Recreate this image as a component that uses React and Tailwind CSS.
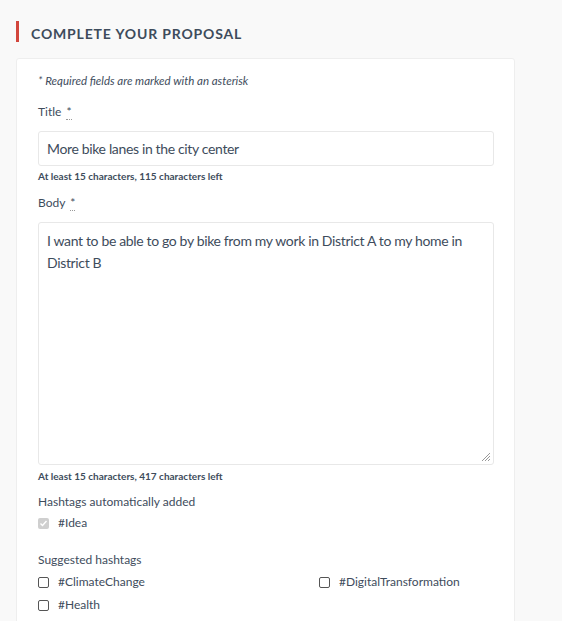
export default function App() {
  const font = { fontFamily: 'Lato, "Liberation Sans", sans-serif' };
  return (
    <div className="min-h-[621px] w-[562px] bg-[#f9f9f9] text-[#3e4c5c]" style={font}>
      <div className="pl-4 pt-[21px]">
        {/* Section heading */}
        <div className="flex items-center h-[21px] border-l-[3px] border-[#d2463c] pl-3">
          <h2 className="pt-[5px] text-[14px] font-bold tracking-[0.06em] uppercase text-[#3e4c5c] leading-none">
            Complete your proposal
          </h2>
        </div>

        {/* Card */}
        <div className="mt-[16px] w-[499px] bg-white border border-[#eeeeee] rounded-[3px] pl-[21px] pr-[20px] pt-[14px] pb-4">
          <p className="text-[11.5px] italic text-[#3e4c5c] leading-[16px]">* Required fields are marked with an asterisk</p>

          <label className="block mt-[15px] text-[12px] leading-[16px]">
            Title <abbr className="no-underline border-b border-dotted border-[#999] ml-0.5" title="Required field">*</abbr>
          </label>
          <div className="mt-[11px] h-[35px] border border-[#e8e8e8] rounded-[3px] flex items-center px-2 text-[14px] tracking-[-0.35px] text-[#3e4c5c]">
            More bike lanes in the city center
          </div>
          <p className="mt-[4px] text-[10px] font-bold leading-[12px]">At least 15 characters, 115 characters left</p>

          <label className="block mt-[13px] text-[12px] leading-[16px]">
            Body <abbr className="no-underline border-b border-dotted border-[#999] ml-0.5" title="Required field">*</abbr>
          </label>
          <div className="relative mt-[11px] h-[243px] border border-[#e8e8e8] rounded-[3px] px-2 pt-[7px] text-[14px] leading-[22px] tracking-[-0.35px] text-[#3e4c5c]">
            I want to be able to go by bike from my work in District A to my home in District B
            <svg className="absolute right-[2px] bottom-[2px]" width="10" height="10" viewBox="0 0 10 10">
              <path d="M9 1L1 9M9 4L4 9M9 7L7 9" stroke="#999" strokeWidth="1" />
            </svg>
          </div>
          <p className="mt-[5px] text-[10px] font-bold leading-[12px]">At least 15 characters, 417 characters left</p>

          <p className="mt-[12px] text-[12px] leading-[16px]">Hashtags automatically added</p>
          <label className="mt-[5px] flex items-center gap-[9px] text-[12px] leading-[16px]">
            <span className="w-[11px] h-[11px] rounded-[2px] bg-[#cfcfcf] flex items-center justify-center">
              <svg width="9" height="9" viewBox="0 0 9 9">
                <path d="M1.5 4.5L3.5 6.5L7.5 2" stroke="#fff" strokeWidth="1.4" fill="none" />
              </svg>
            </span>
            #Idea
          </label>

          <p className="mt-[21px] text-[12px] leading-[16px]">Suggested hashtags</p>
          <div className="mt-[6px] grid grid-cols-[281px_1fr] gap-y-[7px] text-[12px] leading-[16px]">
            {['#ClimateChange', '#DigitalTransformation', '#Health'].map(tag => (
              <label key={tag} className="flex items-center gap-[9px]">
                <span className="w-[11px] h-[11px] rounded-[2px] border border-[#555] bg-white" />
                {tag}
              </label>
            ))}
          </div>
        </div>
      </div>
    </div>
  );
}
